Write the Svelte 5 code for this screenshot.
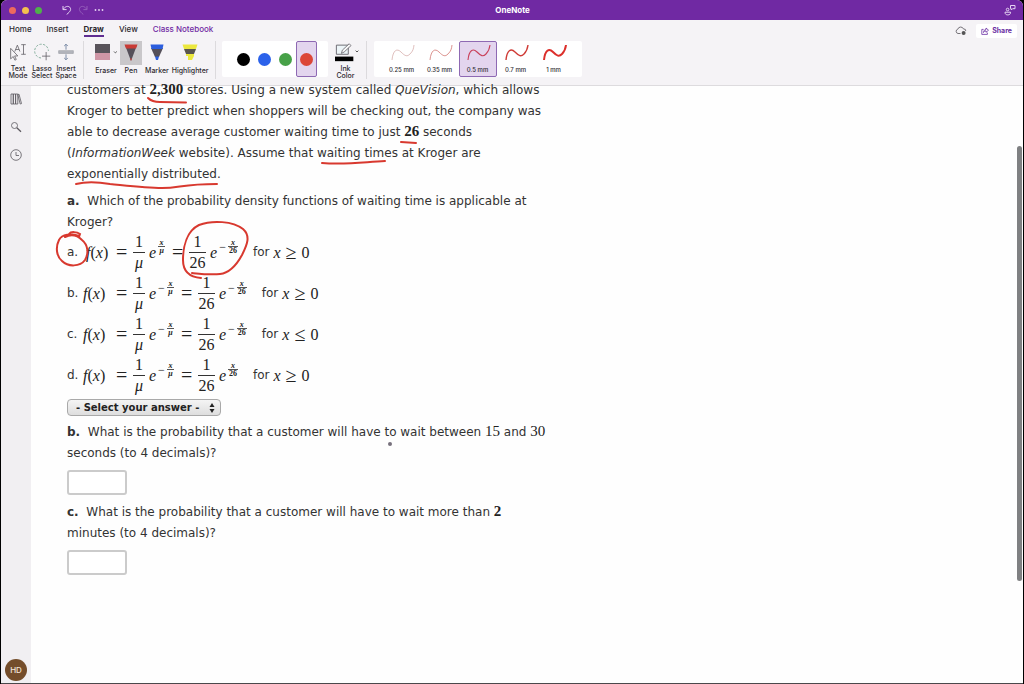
<script>
  let tab = 'Draw';
  let tool = 'Pen';
  let ink = '#dc4637';
  let size = '0.5 mm';
  let answer = '';
  let answerB = '';
  let answerC = '';

  const tabs = ['Home', 'Insert', 'Draw', 'View', 'Class Notebook'];

  const inks = [
    { name: 'Black', value: '#000000' },
    { name: 'Blue', value: '#2b62ea' },
    { name: 'Green', value: '#47a148' },
    { name: 'Red', value: '#dc4637' },
  ];

  const sizes = [
    { label: '0.25 mm', width: 0.6, color: '#c99490' },
    { label: '0.35 mm', width: 0.8, color: '#d27772' },
    { label: '0.5 mm', width: 1.1, color: '#c9405a' },
    { label: '0.7 mm', width: 1.4, color: '#cf3b36' },
    { label: '1 mm', width: 2, color: '#dc2f2b' },
  ];

  const choices = [
    { id: 'a', negMu: false, neg26: true, sign: '≥' },
    { id: 'b', negMu: true, neg26: true, sign: '≥' },
    { id: 'c', negMu: true, neg26: true, sign: '≤' },
    { id: 'd', negMu: true, neg26: false, sign: '≥' },
  ];
</script>

<div class="window">
  <header class="title-bar">
    <div class="left">
      <span class="light red"></span>
      <span class="light yellow"></span>
      <span class="light green"></span>
      <button class="bar-button undo" aria-label="Undo">
        <svg width="10" height="10" viewBox="0 0 10 10"><path d="M1 1v3.6h3.6M1.2 4.4C3 1.4 6 .6 7.7 2.2c1.8 1.800 1 4.200-3 7.200" /></svg>
      </button>
      <button class="bar-button redo" aria-label="Redo">
        <svg width="10" height="10" viewBox="0 0 10 10"><path d="M9 1v3.600H5.400M8.800 4.400C7 1.400 4 .6 2.300 2.200c-1.800 1.800-1 4.200 3 7.200" /></svg>
      </button>
      <button class="bar-button more" aria-label="More">
        <svg width="10" height="10" viewBox="0 0 10 10"><circle cx="1.500" cy="5" r=".9" /><circle cx="5" cy="5" r=".9" /><circle cx="8.500" cy="5" r=".9" /></svg>
      </button>
    </div>
    <div class="title">OneNote</div>
    <div class="right">
      <button class="bar-button" aria-label="Activity">
        <svg width="12" height="12" viewBox="0 0 12 12"><path d="M6.500 1.500h4.500v3.200H8.600L7.300 6V4.700h-.8zM3.600 4.200a1.300 1.300 0 1 1 0 2.600 1.300 1.300 0 0 1 0-2.600M1 8.200h5.600c0 2-1.200 2.700-2.800 2.700S1 10.200 1 8.200z" /></svg>
      </button>
    </div>
  </header>

  <div class="tab-bar">
    <nav>
      {#each tabs as name}
        <button class="tab" class:active={tab === name} class:special={name === 'Class Notebook'} on:click={() => (tab = name)}>{name}</button>
      {/each}
    </nav>
    <div class="share-area">
      <svg width="12" height="10" viewBox="0 0 12 10" fill="none" stroke="#68646b" stroke-width=".9">
        <path d="M5.500 7.500H3A2.200 2.200 0 0 1 2.800 3.200 3 3 0 0 1 8.500 3a2 2 0 0 1 2.300 2" />
        <circle cx="8.600" cy="7" r="2" fill="#555" stroke="none" />
      </svg>
      <button class="share">
        <svg width="8" height="8" viewBox="0 0 8 8" fill="none" stroke="#6b2fa3" stroke-width=".8"><path d="M2.600 2.400H.8v5h5.600V5.600M2.500 5.500C2.600 3.500 3.600 2.600 5 2.600V1l2.500 2.200L5 5.300V3.900c-1.200 0-2 .6-2.500 1.600z" /></svg>
        Share
      </button>
    </div>
  </div>

  <div class="ribbon">
    <div class="group modes">
      <button class="tool">
        <svg width="20" height="24" viewBox="0 0 20 24" fill="none" stroke="#66636a" stroke-width=".9">
          <path d="M2 8v11.500l2.800-2.600 1.800 4 1.500-.7-1.800-3.900h3.500z" />
          <path d="M6.500 11.500l2.800-7 2.800 7M7.400 9.300h3.800M13.500 4h5M16 4v10.500M13.500 14.500h5" />
        </svg>
        Text<br />Mode
      </button>
      <button class="tool">
        <svg width="20" height="24" viewBox="0 0 20 24" fill="none" stroke="#77747a" stroke-width=".9">
          <circle cx="9.500" cy="11" r="7.500" stroke="#6fa08a" stroke-dasharray="2.500 1.600" />
          <path d="M10 11h9v9h-9z" fill="#f5f3f6" stroke="none" />
          <path d="M14.500 12v9M10 16.500h9" stroke="#66636a" />
        </svg>
        Lasso<br />Select
      </button>
      <button class="tool">
        <svg width="20" height="24" viewBox="0 0 20 24" fill="none" stroke="#7b8190" stroke-width="1">
          <path d="M2 10.500h16v3H2z" fill="#b5b7be" stroke="#8f9199" stroke-width=".6" />
          <path d="M10 9.500V3.500M8 5.500l2-2 2 2M10 14.500v6M8 18.500l2 2 2-2" stroke="#7283a0" />
        </svg>
        Insert<br />Space
      </button>
    </div>

    <div class="group pens">
      <button class="tool" class:picked={tool === 'Eraser'} on:click={() => (tool = 'Eraser')}>
        <svg width="22" height="24" viewBox="0 0 22 24"><path d="M0 3h15v9H0z" fill="#59545b" /><path d="M0 12h15v7H0z" fill="#cf96a6" /><path d="M19 10.500l1.400 1.400 1.400-1.400" fill="none" stroke="#555" /></svg>
        Eraser
      </button>
      <button class="tool" class:picked={tool === 'Pen'} on:click={() => (tool = 'Pen')}>
        <svg width="22" height="24" viewBox="0 0 22 24"><path d="M5 4h12l-6 16z" fill="#55505a" /><path d="M4.500 3.500h13L16 7.500H6z" fill="#c93b36" /><path d="M10 17.500h2L11 20z" fill="#c93b36" /></svg>
        Pen
      </button>
      <button class="tool" class:picked={tool === 'Marker'} on:click={() => (tool = 'Marker')}>
        <svg width="22" height="24" viewBox="0 0 22 24"><path d="M5 7h12l-4 9H9z" fill="#55505a" /><path d="M4.500 3.500h13L16.500 8h-11z" fill="#2c5ede" /><path d="M9 15.500h4l-1 3.500h-2z" fill="#2c5ede" /></svg>
        Marker
      </button>
      <button class="tool" class:picked={tool === 'Highlighter'} on:click={() => (tool = 'Highlighter')}>
        <svg width="22" height="24" viewBox="0 0 22 24"><path d="M3.500 3.500h15L17 8H5z" fill="#ece83f" /><path d="M5 8h12l-2 5H7z" fill="#5a564f" /><path d="M7 13h8v2l-2 4H9V15H7z" fill="#ece83f" /></svg>
        Highlighter
      </button>
    </div>

    <div class="group colors">
      <div class="panel swatches">
        {#each inks as c}
          <button class="swatch" class:chosen={ink === c.value} aria-label={c.name} on:click={() => (ink = c.value)}>
            <span class="dot" style="background-color: {c.value}"></span>
          </button>
        {/each}
      </div>
      <button class="tool ink-color">
        <svg width="28" height="24" viewBox="0 0 28 24" fill="none" stroke="#66646b">
          <path d="M3.500 4.500h13v10h-13z" fill="#edf5f8" />
          <path d="M9 13.500l1-3.500 7.500-7 2 2-7.500 7z" fill="#f7f7f7" stroke-width=".9" />
          <path d="M2 17h20v5H2z" fill="#000" stroke="none" />
          <path d="M24.500 10.500l1.500 1.500 1.500-1.500" stroke="#444" />
        </svg>
        Ink<br />Color
      </button>
    </div>

    <div class="group">
      <div class="panel sizes">
        {#each sizes as s}
          <button class="size" class:chosen={size === s.label} on:click={() => (size = s.label)}>
            <svg width="26" height="22" viewBox="0 0 26 22"><path d="M3 18C4 8 8 6 12 10s6 5 9 2 3.500-5 4-9" fill="none" stroke={s.color} stroke-width={s.width} /></svg>
            {s.label}
          </button>
        {/each}
      </div>
    </div>
  </div>

  <div class="body">
    <aside>
      <button class="side-button" aria-label="Notebooks">
        <svg width="12" height="12" viewBox="0 0 12 12"><path d="M1 1h2.300v10H1zM3.300 1h2.300v10H3.300zM5.600 1h2.200v10H5.600zM7.800 1.600L9 1.200l2.500 9.400-1.300.4z" /></svg>
      </button>
      <button class="side-button" aria-label="Search">
        <svg width="12" height="12" viewBox="0 0 12 12"><circle cx="4.500" cy="4.500" r="3" /><path d="M6.800 6.800l4.200 4" stroke-width="1.300" /></svg>
      </button>
      <button class="side-button" aria-label="Recent">
        <svg width="12" height="12" viewBox="0 0 12 12"><circle cx="6" cy="6" r="5.300" /><path d="M6 3v3.500h3" /></svg>
      </button>
      <div class="avatar">HD</div>
    </aside>

    <main>
      <article>
        <p>
          customers at <b class="num">2,300</b> stores. Using a new system called <i>QueVision</i>, which allows<br />
          Kroger to better predict when shoppers will be checking out, the company was<br />
          able to decrease average customer waiting time to just <b class="num">26</b> seconds<br />
          (<i>InformationWeek</i> website). Assume that waiting times at Kroger are<br />
          exponentially distributed.
        </p>
        <p>
          <b>a.</b>&nbsp; Which of the probability density functions of waiting time is applicable at<br />
          Kroger?
        </p>

        <div class="choices">
          {#each choices as c}
            <div class="choice">
              <span class="letter">{c.id}.</span>
              <span class="math fx" class:wide={c.id === 'a'}><i>f</i>(<i>x</i>)</span>
              <span class="math op eq">=</span>
              <span class="math frac mu"><span>1</span><span><i>μ</i></span></span>
              <span class="math e"><i>e</i></span>
              <span class="math exp">
                {#if c.negMu}<span class="minus">−</span>{/if}
                <span class="small-frac"><i>x</i><i>μ</i></span>
              </span>
              <span class="math op eq">=</span>
              <span class="math frac"><span>1</span><span>26</span></span>
              <span class="math e"><i>e</i></span>
              <span class="math exp">
                {#if c.neg26}<span class="minus">−</span>{/if}
                <span class="small-frac wide"><i>x</i><span>26</span></span>
              </span>
              <span class="for">for</span>
              <span class="math bound"><i>x</i><span class="op">{c.sign}</span>0</span>
            </div>
          {/each}
        </div>

        <div class="select-wrap">
          <select aria-label="Select your answer" bind:value={answer}>
            <option value="">- Select your answer -</option>
            {#each choices as c}
              <option value={c.id}>{c.id}</option>
            {/each}
          </select>
          <svg class="arrows" width="6" height="10" viewBox="0 0 6 10"><path d="M3 0l2.500 4h-5zM3 10L.5 6h5z" fill="#222" /></svg>
        </div>

        <p>
          <label for="answer-b"><b>b.</b>&nbsp; What is the probability that a customer will have to wait between <span class="num">15</span> and <span class="num">30</span><br />
          seconds (to 4 decimals)?</label>
        </p>
        <input id="answer-b" type="text" bind:value={answerB} />
        <p>
          <label for="answer-c"><b>c.</b>&nbsp; What is the probability that a customer will have to wait more than <b class="num">2</b><br />
          minutes (to 4 decimals)?</label>
        </p>
        <input id="answer-c" type="text" bind:value={answerC} />
      </article>

      <!-- pen strokes drawn over the page -->
      <svg class="strokes" width="560" height="500" viewBox="31 86 560 500">
        <path d="M148 98c3 3 7 4 12 4l26 .5" />
        <path d="M401 142l15 1" />
        <path d="M322 163c24 2 42-1 63-2" />
        <path d="M76 184c12-3 22-2 34 0 20 2 36 4 52 4 18 0 20-4 55-4" />
        <path d="M69 234c2-3 8-2 11 0l-1 3M79 236c-8-3-17-2-20 4-4 8-2 17 3 21 6 6 18 6 23-1 4-7 3-15-3-20-5-5-11-6-17-3" />
        <path d="M201 278c-12-1-18-7-18-18 0-14 4-29 16-35 13-5 34-4 44 4 8 7 4 16-1 26-6 11-13 18-22 19-9 1-18 0-28-1" />
        <circle class="cursor" cx="390" cy="444" r="2" />
      </svg>
      <div class="scrollbar"></div>
    </main>
  </div>
</div>

<style>
  :global(body) {
    background-color: #000;
  }
  button {
    border: none;
    background: none;
    padding: 0;
    color: inherit;
    font: inherit;
    cursor: pointer;
  }
  svg {
    display: block;
  }
  .window {
    box-sizing: border-box;
    height: 100vh;
    display: flex;
    flex-direction: column;
    margin: 0 1px;
    border-bottom: 1px solid #4a484b;
    border-radius: 6px 6px 0 0;
    overflow: hidden;
    background-color: #fff;
    color: #2d2a2f;
    font-family: Inter, 'Liberation Sans', sans-serif;
    font-size: 8px;
  }
  .title-bar {
    flex: none;
    height: 20px;
    display: flex;
    align-items: center;
    background-color: #7029a3;
    color: #fff;
  }
  .title-bar .left,
  .title-bar .right {
    flex: 1;
    display: flex;
    align-items: center;
  }
  .title-bar .left {
    gap: 6px;
    padding-left: 8px;
  }
  .title-bar .right {
    justify-content: flex-end;
    padding-right: 7px;
  }
  .title {
    font-weight: 700;
  }
  .light {
    width: 7px;
    height: 7px;
    border-radius: 50%;
  }
  .red {
    background-color: #ed6a5e;
  }
  .yellow {
    background-color: #f4bf4f;
  }
  .green {
    background-color: #4fb04b;
  }
  .bar-button svg {
    fill: none;
    stroke: #e6d5f2;
  }
  .undo {
    margin-left: 14px;
  }
  .redo {
    opacity: 0.3;
  }
  .bar-button.more svg {
    fill: #e6d5f2;
    stroke: none;
  }
  .tab-bar {
    flex: none;
    height: 18px;
    display: flex;
    justify-content: space-between;
    background-color: #f5f3f6;
  }
  nav {
    display: flex;
    gap: 15px;
    padding-left: 8px;
  }
  .tab {
    height: 17px;
    padding-top: 2px;
    border-bottom: 2px solid transparent;
    font-weight: 500;
  }
  .tab.active {
    border-color: #5f2d91;
    font-weight: 700;
  }
  .tab.special {
    color: #7029a3;
  }
  .share-area {
    display: flex;
    align-items: center;
    gap: 9px;
    padding: 3px 6px 0 0;
  }
  .share {
    display: flex;
    align-items: center;
    gap: 3px;
    height: 14px;
    padding: 0 5px;
    border-radius: 2px;
    background-color: #fff;
    color: #6b2fa3;
    font-size: 7px;
    font-weight: 700;
  }
  .ribbon {
    flex: none;
    box-sizing: border-box;
    height: 48px;
    display: flex;
    align-items: flex-start;
    padding: 3px 0 0 5px;
    border-bottom: 1px solid #dddbde;
    background-color: #f5f3f6;
    font-size: 6px;
    font-weight: 500;
    line-height: 7px;
  }
  .group {
    display: flex;
    height: 38px;
  }
  .group:not(:last-child) {
    border-right: 1px solid #dcdadd;
  }
  .tool {
    display: flex;
    flex-direction: column;
    align-items: center;
    justify-content: flex-start;
    font-size: 7px;
  }
  .tool svg {
    margin-bottom: 2px;
  }
  .modes {
    padding-right: 5px;
  }
  .modes .tool {
    width: 24px;
  }
  .pens {
    gap: 3px;
    padding: 0 6px 0 11px;
  }
  .pens .tool {
    min-width: 22px;
  }
  .pens .picked svg {
    background-color: #c9c7ca;
  }
  .colors {
    gap: 4px;
    padding: 0 6px;
  }
  .panel {
    display: flex;
    height: 36px;
    border-radius: 2px;
    background-color: #fff;
  }
  .swatches {
    padding: 0 11px;
  }
  .swatch {
    box-sizing: border-box;
    display: grid;
    place-items: center;
    width: 21px;
    border: 1px solid transparent;
    border-radius: 2px;
  }
  .chosen {
    border-color: #8e69b3;
    background-color: #e3d5ee;
  }
  .dot {
    width: 13px;
    height: 13px;
    border-radius: 50%;
  }
  .group:last-child {
    padding-left: 7px;
  }
  .sizes {
    padding: 0 9px;
  }
  .size {
    box-sizing: border-box;
    display: flex;
    flex-direction: column;
    align-items: center;
    gap: 2px;
    width: 38px;
    border: 1px solid transparent;
    border-radius: 2px;
  }
  .size.chosen {
    border-color: #8e69b3;
  }
  .body {
    flex: 1;
    display: flex;
    min-height: 0;
  }
  aside {
    flex: none;
    box-sizing: border-box;
    width: 30px;
    display: flex;
    flex-direction: column;
    align-items: center;
    gap: 16px;
    padding: 7px 0 2px;
    background-color: #f1eff2;
  }
  .side-button svg {
    fill: none;
    stroke: #5c595f;
    stroke-width: 0.8;
  }
  .avatar {
    display: grid;
    place-items: center;
    width: 22px;
    height: 22px;
    margin-top: auto;
    border-radius: 50%;
    background-color: #744d2b;
    color: #f3e6da;
    font-size: 8px;
    font-weight: 500;
  }
  main {
    position: relative;
    flex: 1;
    background-color: #fefefe;
  }
  /* the page is scrolled so that its first line touches the ribbon */
  article {
    margin-top: -6px;
    padding-left: 36px;
    color: #333;
    font-family: Verdana, 'DejaVu Sans', sans-serif;
    font-size: 12px;
    line-height: 21px;
    white-space: nowrap;
  }
  p {
    margin: 0 0 6px;
  }
  .num,
  .math {
    font-family: 'Liberation Serif', serif;
    color: #222;
  }
  .num {
    font-size: 15px;
    line-height: 1;
  }
  .math {
    font-size: 16px;
  }
  .choices {
    margin-top: -7px;
  }
  .choice {
    display: flex;
    align-items: center;
    height: 41px;
  }
  .letter {
    width: 16px;
  }
  .fx {
    width: 33px;
  }
  .fx.wide {
    padding-left: 3px;
    width: 30px;
  }
  .op {
    font-size: 20px;
  }
  .eq {
    width: 17px;
  }
  .frac {
    display: flex;
    flex-direction: column;
    align-items: center;
    width: 17px;
    line-height: 20px;
  }
  .frac.mu {
    width: 12px;
  }
  .frac span:first-child {
    align-self: stretch;
    border-bottom: 1px solid #333;
    text-align: center;
  }
  .e {
    padding: 0 2px 0 4px;
  }
  .exp {
    display: flex;
    align-items: center;
    align-self: flex-start;
    gap: 2px;
    height: 30px;
    margin-right: 7px;
    font-size: 12px;
  }
  .small-frac {
    display: flex;
    flex-direction: column;
    align-items: center;
    width: 7px;
    font-size: 8px;
    font-weight: 700;
    line-height: 8px;
  }
  .small-frac.wide {
    width: 10px;
  }
  .small-frac i:first-child {
    align-self: stretch;
    border-bottom: 1px solid #555;
    line-height: 6px;
    text-align: center;
  }
  .for {
    margin: 0 4px 0 8px;
  }
  .bound {
    display: flex;
    align-items: center;
    gap: 5px;
  }
  .select-wrap {
    position: relative;
    width: 154px;
    margin: 3px 0 6px;
  }
  select {
    appearance: none;
    display: block;
    box-sizing: border-box;
    width: 100%;
    height: 17px;
    padding: 0 8px;
    border: 1px solid #a9a9a9;
    border-radius: 4px;
    background: linear-gradient(#f4f4f4, #dedede);
    color: #222;
    font: bold 10px Verdana, 'DejaVu Sans', sans-serif;
  }
  .arrows {
    position: absolute;
    top: 4px;
    right: 6px;
    pointer-events: none;
  }
  input {
    display: block;
    box-sizing: border-box;
    width: 60px;
    height: 25px;
    margin: 0 0 7px;
    border: 2px solid #cbcbcb;
    border-radius: 3px;
    background-color: #fff;
  }
  .strokes {
    position: absolute;
    top: 0;
    left: 0;
    fill: none;
    stroke: #d8392f;
    stroke-width: 2;
    stroke-linecap: round;
    pointer-events: none;
  }
  .cursor {
    fill: #77717c;
    stroke: none;
  }
  .scrollbar {
    position: absolute;
    top: 10%;
    right: 1px;
    width: 5px;
    height: 73%;
    border-radius: 3px;
    background-color: #7f8082;
  }
</style>
